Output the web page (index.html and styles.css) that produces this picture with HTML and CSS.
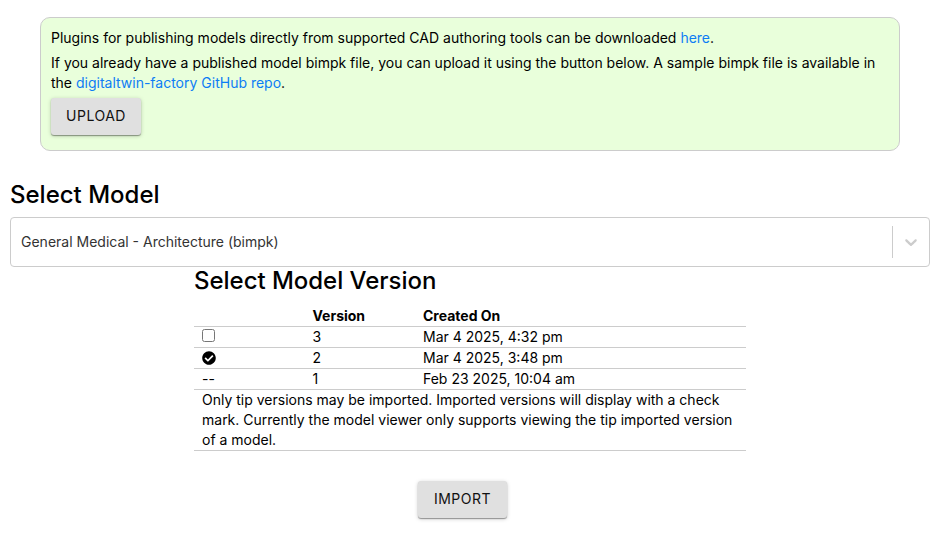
FILE: index.html
```html
<!DOCTYPE html>
<html lang="en">
<head>
<meta charset="utf-8">
<title>Import Model</title>
<link rel="stylesheet" href="styles.css">
</head>
<body>
<main class="page">
  <section class="notice">
    <p>Plugins for publishing models directly from supported CAD authoring tools can be downloaded <a href="#">here</a>.</p>
    <p>If you already have a published model bimpk file, you can upload it using the button below. A sample bimpk file is available in the <a href="#">digitaltwin-factory GitHub repo</a>.</p>
    <button class="button">Upload</button>
  </section>
  <h1 class="title">Select Model</h1>
  <div class="select">
    <span class="select-value">General Medical - Architecture (bimpk)</span>
    <span class="select-separator"></span>
    <span class="select-arrow">
      <svg width="20" height="20" viewBox="0 0 20 20"><path fill="currentColor" d="M4.516 7.548c0.436-0.446 1.043-0.481 1.576 0l3.908 3.747 3.908-3.747c0.533-0.481 1.141-0.446 1.574 0 0.436 0.445 0.408 1.197 0 1.615-0.406 0.418-4.695 4.502-4.695 4.502-0.217 0.223-0.502 0.335-0.787 0.335s-0.57-0.112-0.789-0.335c0 0-4.287-4.084-4.695-4.502s-0.436-1.17 0-1.615z"/></svg>
    </span>
  </div>
  <section class="versions">
    <h2 class="title">Select Model Version</h2>
    <table>
      <thead><tr><th class="col-state"></th><th class="col-version">Version</th><th>Created On</th></tr></thead>
      <tbody>
        <tr><td><input type="checkbox"></td><td>3</td><td>Mar 4 2025, 4:32 pm</td></tr>
        <tr><td><svg class="check" width="14" height="14" viewBox="0 0 512 512"><path d="M504 256c0 136.967-111.033 248-248 248S8 392.967 8 256 119.033 8 256 8s248 111.033 248 248zM227.314 387.314l184-184c6.248-6.248 6.248-16.379 0-22.627l-22.627-22.627c-6.248-6.249-16.379-6.249-22.628 0L216 308.118l-70.059-70.059c-6.248-6.248-16.379-6.248-22.628 0l-22.627 22.627c-6.248 6.248-6.248 16.379 0 22.627l104 104c6.249 6.249 16.379 6.249 22.628.001z"/></svg></td><td>2</td><td>Mar 4 2025, 3:48 pm</td></tr>
        <tr><td>--</td><td>1</td><td>Feb 23 2025, 10:04 am</td></tr>
        <tr><td colspan="3">Only tip versions may be imported. Imported versions will display with a check mark. Currently the model viewer only supports viewing the tip imported version of a model.</td></tr>
      </tbody>
    </table>
  </section>
  <div class="actions"><button class="button">Import</button></div>
</main>
</body>
</html>
```
FILE: styles.css
```css
* { box-sizing: border-box; }
body {
  margin: 0;
  background: #fff;
  color: #000;
  font: 14px/20px Inter, "Liberation Sans", sans-serif;
}
.page { min-height: 535px; padding: 17px 20px 0 10px; }
.notice {
  width: 860px;
  height: 134px;
  margin-left: 30px;
  padding: 10px;
  border: 1px solid #ccc;
  border-radius: 10px;
  background: #e9ffdb;
}
.notice p { margin: 0 0 5px; }
a { color: #0d7df5; text-decoration: none; }
.button {
  display: block;
  width: 90px;
  height: 37px;
  padding: 0 0 1px;
  border: 0;
  border-radius: 3px;
  background: #e0e0e0;
  color: #111;
  font: 400 14px/36px Inter, "Liberation Sans", sans-serif;
  letter-spacing: 0.5px;
  text-transform: uppercase;
  box-shadow: 0 1px 1px rgba(0, 0, 0, 0.35), 0 1px 4px rgba(0, 0, 0, 0.2);
}
.title { margin: 0; font-size: 24px; font-weight: 500; line-height: 28px; }
h1.title { margin-top: 30px; }
.select {
  display: flex;
  align-items: center;
  width: 920px;
  height: 50px;
  margin-top: 8px;
  padding-left: 10px;
  border: 1px solid #ccc;
  border-radius: 4px;
}
.select-value { flex: 1; color: #333; }
.select-separator { width: 1px; height: 32px; background: #ccc; }
.select-arrow { display: flex; padding: 8px; color: #ccc; }
.versions { width: 552px; margin-left: 184px; }
.versions .title { letter-spacing: -0.03px; }
table { width: 100%; margin-top: 11px; border-collapse: separate; border-spacing: 0; table-layout: fixed; }
th, td { height: 21px; padding: 0 8px; border-bottom: 1px solid #ccc; text-align: left; vertical-align: top; }
.col-state, .col-version { width: 110.5px; }
input { display: block; width: 13px; height: 13px; margin: 2px 0 0; }
.check { display: block; margin-top: 3px; }
.actions { width: 552px; margin: 30px 0 0 184px; padding-right: 15px; }
.actions .button { width: 89px; margin: 0 auto; }
```
